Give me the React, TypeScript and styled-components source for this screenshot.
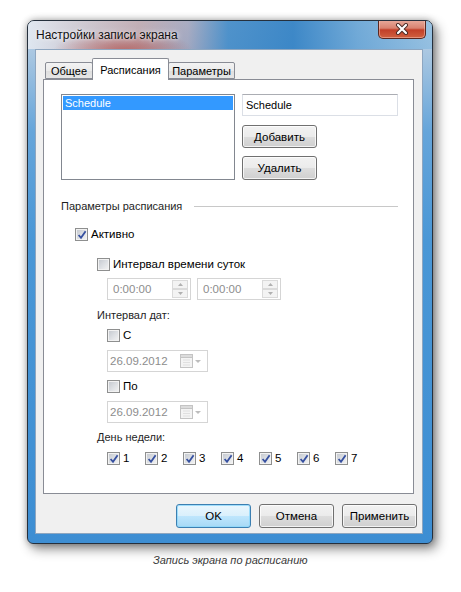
import React from "react";
import styled, { createGlobalStyle } from "styled-components";

const GlobalStyle = createGlobalStyle`
  html, body {
    margin: 0;
    padding: 0;
    background: #fff;
  }
  body {
    font-family: "Liberation Sans", Arial, sans-serif;
    font-size: 11px;
    color: #000;
  }
`;

const Page = styled.div`
  width: 461px;
  height: 592px;
  box-sizing: border-box;
  padding: 20px 0 0 27px;
  display: flex;
  flex-direction: column;
  background: #fff;
  overflow: hidden;
`;

const Window = styled.div`
  width: 406px;
  height: 524px;
  box-sizing: border-box;
  border: 1px solid #25303d;
  border-radius: 7px 7px 6px 6px;
  background: linear-gradient(
    180deg,
    #c3d5e6 0px,
    #a2c3e0 40px,
    #66a5da 110px,
    #4a97d6 220px,
    #3d8ed3 100%
  );
  box-shadow: 4px 5px 12px rgba(0, 0, 0, 0.45), 0 0 7px rgba(0, 0, 0, 0.3);
  display: flex;
  flex-direction: column;
  overflow: hidden;
`;

const TitleBar = styled.div`
  height: 28px;
  flex: none;
  display: flex;
  align-items: flex-start;
  justify-content: space-between;
  padding: 0 6px 0 8px;
  background: radial-gradient(
      ellipse 70px 22px at 95px 30px,
      rgba(180, 85, 80, 0.75),
      rgba(180, 85, 80, 0) 100%
    ),
    linear-gradient(
      90deg,
      rgba(228, 234, 242, 0.9) 0px,
      rgba(215, 200, 205, 0.7) 50px,
      rgba(195, 150, 150, 0.6) 110px,
      rgba(150, 140, 165, 0.55) 160px,
      rgba(60, 135, 198, 0.85) 200px,
      rgba(48, 128, 196, 0.9) 265px,
      rgba(95, 160, 212, 0.8) 330px,
      rgba(140, 188, 224, 0.75) 100%
    );
`;

const Title = styled.div`
  align-self: center;
  font-size: 12px;
  color: #111;
  text-shadow: 0 0 6px rgba(255, 255, 255, 0.85), 0 0 3px rgba(255, 255, 255, 0.7);
`;

const CloseButton = styled.div`
  width: 48px;
  height: 19px;
  margin-top: -1px;
  box-sizing: border-box;
  border: 1px solid #5a2720;
  border-top: none;
  border-radius: 0 0 5px 5px;
  background: linear-gradient(180deg, #e8ab9c 0%, #d88270 45%, #c23f28 55%, #d0603f 100%);
  box-shadow: inset 0 0 0 1px rgba(255, 210, 200, 0.45);
  display: flex;
  align-items: center;
  justify-content: center;
`;

const Frame = styled.div`
  flex: 1;
  padding: 0 9px 9px 7px;
  display: flex;
`;

const Client = styled.div`
  flex: 1;
  box-sizing: border-box;
  border: 1px solid #8ea6c0;
  background: #f0f0f0;
  padding: 8px 5px 0 7px;
  display: flex;
  flex-direction: column;
`;

const TabStrip = styled.div`
  display: flex;
  align-items: flex-end;
  margin-left: 2px;
  height: 21px;
  position: relative;
  z-index: 1;
`;

const Tab = styled.div<{ $active?: boolean; $width: number }>`
  width: ${(p) => p.$width}px;
  height: ${(p) => (p.$active ? 22 : 17)}px;
  box-sizing: border-box;
  border: 1px solid #898c95;
  border-bottom: ${(p) => (p.$active ? "none" : "1px solid #898c95")};
  margin-bottom: ${(p) => (p.$active ? -1 : 0)}px;
  margin-right: -1px;
  border-radius: 2px 2px 0 0;
  background: ${(p) =>
    p.$active ? "#fff" : "linear-gradient(180deg, #f3f3f3 0%, #ebebeb 50%, #dedede 51%, #e6e6e6 100%)"};
  display: flex;
  align-items: center;
  justify-content: center;
  padding-top: ${(p) => (p.$active ? 0 : 1)}px;
  color: #000;
`;

const Panel = styled.div`
  width: 371px;
  height: 415px;
  box-sizing: border-box;
  border: 1px solid #898c95;
  background: #fff;
  padding: 14px 0 0 17px;
  display: flex;
  flex-direction: column;
`;

const TopRow = styled.div`
  display: flex;
  gap: 7px;
  height: 86px;
`;

const ListBox = styled.div`
  width: 174px;
  height: 86px;
  box-sizing: border-box;
  border: 1px solid #828790;
  padding: 1px;
`;

const ListItem = styled.div<{ $selected?: boolean }>`
  height: 14px;
  line-height: 14px;
  padding-left: 2px;
  background: ${(p) => (p.$selected ? "#3399ff" : "transparent")};
  color: ${(p) => (p.$selected ? "#fff" : "#000")};
`;

const SideColumn = styled.div`
  display: flex;
  flex-direction: column;
  gap: 8px;
`;

const TextInput = styled.div`
  width: 156px;
  height: 22px;
  box-sizing: border-box;
  border: 1px solid #dbdfe6;
  border-top-color: #abadb3;
  padding-left: 3px;
  display: flex;
  align-items: center;
  margin-bottom: 1px;
`;

const Button = styled.div<{ $default?: boolean; $width?: number }>`
  width: ${(p) => p.$width ?? 75}px;
  height: 24px;
  box-sizing: border-box;
  border: 1px solid ${(p) => (p.$default ? "#3c7fb1" : "#707070")};
  border-radius: 3px;
  background: ${(p) =>
    p.$default
      ? "linear-gradient(180deg, #eaf6fd 0%, #d9f0fc 50%, #bee6fd 51%, #a7d9f5 100%)"
      : "linear-gradient(180deg, #f2f2f2 0%, #ebebeb 50%, #dddddd 51%, #cfcfcf 100%)"};
  box-shadow: inset 0 0 0 1px
    ${(p) => (p.$default ? "rgba(140, 215, 250, 0.8)" : "rgba(255, 255, 255, 0.75)")};
  display: flex;
  align-items: center;
  justify-content: center;
  font-size: 11.5px;
  color: #000;
`;

const GroupHeader = styled.div`
  display: flex;
  align-items: center;
  gap: 12px;
  height: 14px;
  margin: 19px 15px 0 0;
  color: #1e1e1e;
`;

const GroupLine = styled.div`
  flex: 1;
  height: 1px;
  background: #c8c8c8;
`;

const Row = styled.div<{ $indent: number; $top: number; $gap?: number }>`
  display: flex;
  align-items: center;
  margin-left: ${(p) => p.$indent}px;
  margin-top: ${(p) => p.$top}px;
  gap: ${(p) => p.$gap ?? 0}px;
`;

const Label = styled.div<{ $indent: number; $top: number }>`
  height: 14px;
  line-height: 14px;
  margin-left: ${(p) => p.$indent}px;
  margin-top: ${(p) => p.$top}px;
  color: #1e1e1e;
`;

const CheckItem = styled.div<{ $width?: number }>`
  display: flex;
  align-items: center;
  gap: 3px;
  height: 13px;
  width: ${(p) => (p.$width ? `${p.$width}px` : "auto")};
  line-height: 13px;
  font-size: 11.5px;
`;

const Box = styled.span`
  width: 13px;
  height: 13px;
  flex: none;
  box-sizing: border-box;
  border: 1px solid #8e8f8f;
  background: linear-gradient(135deg, #c2c6cd 0%, #dcdfe3 50%, #f4f4f4 100%);
  box-shadow: inset 0 0 0 1px #f2f2f2;
  display: flex;
  align-items: center;
  justify-content: center;
`;

const Spinner = styled.div`
  width: 84px;
  height: 22px;
  box-sizing: border-box;
  border: 1px solid #d5d5d5;
  display: flex;
  align-items: center;
  justify-content: space-between;
  padding: 0 2px 0 5px;
  color: #8d8d8d;
  font-size: 11.5px;
`;

const SpinButtons = styled.div`
  width: 16px;
  height: 18px;
  display: flex;
  flex-direction: column;
`;

const SpinButton = styled.div`
  flex: 1;
  box-sizing: border-box;
  border: 1px solid #dadada;
  background: #f3f3f3;
  display: flex;
  align-items: center;
  justify-content: center;
`;

const DateBox = styled.div`
  width: 101px;
  height: 22px;
  box-sizing: border-box;
  border: 1px solid #d5d5d5;
  display: flex;
  align-items: center;
  padding: 0 5px 0 2px;
  color: #8d8d8d;
  font-size: 11.5px;
`;

const DateText = styled.span`
  flex: 1;
`;

const ButtonRow = styled.div`
  display: flex;
  justify-content: flex-end;
  gap: 8px;
  margin-top: 10px;
`;

const Caption = styled.div`
  margin: 9px 0 0 126px;
  font-style: italic;
  font-size: 11px;
  line-height: 14px;
  color: #3a3a3a;
`;

const Check = () => (
  <svg width="10" height="10" viewBox="0 0 10 10">
    <path d="M1.6 5 L4 7.8 L8.6 1.2" fill="none" stroke="#3650a0" strokeWidth="1.8" />
  </svg>
);

const CheckBox: React.FC<{ checked?: boolean; label: string; width?: number }> = ({
  checked,
  label,
  width,
}) => (
  <CheckItem $width={width}>
    <Box>{checked && <Check />}</Box>
    <span>{label}</span>
  </CheckItem>
);

const Arrow: React.FC<{ up?: boolean }> = ({ up }) => (
  <svg width="5" height="3" viewBox="0 0 5 3">
    <path d={up ? "M0 3 L2.5 0 L5 3 Z" : "M0 0 L2.5 3 L5 0 Z"} fill="#b0b0b0" />
  </svg>
);

const TimeSpinner = () => (
  <Spinner>
    <span>0:00:00</span>
    <SpinButtons>
      <SpinButton>
        <Arrow up />
      </SpinButton>
      <SpinButton>
        <Arrow />
      </SpinButton>
    </SpinButtons>
  </Spinner>
);

const DatePicker = () => (
  <DateBox>
    <DateText>26.09.2012</DateText>
    <svg width="22" height="14" viewBox="0 0 22 14">
      <rect x="0.5" y="0.5" width="12" height="13" fill="#f4f4f4" stroke="#c4c4c4" />
      <rect x="0.5" y="0.5" width="12" height="3" fill="#dcdcdc" stroke="#c4c4c4" />
      <path d="M3 6h7M3 8.5h7M3 11h7" stroke="#e0e0e0" />
      <path d="M15 6 L21 6 L18 9 Z" fill="#bdbdbd" />
    </svg>
  </DateBox>
);

const App: React.FC = () => {
  return (
    <>
      <GlobalStyle />
      <Page>
        <Window>
          <TitleBar>
            <Title>Настройки записи экрана</Title>
            <CloseButton>
              <svg width="14" height="12" viewBox="0 0 14 12">
                <path d="M3 2 L11 10 M11 2 L3 10" stroke="#4a2a25" strokeWidth="4" strokeLinecap="round" />
                <path d="M3 2 L11 10 M11 2 L3 10" stroke="#fff" strokeWidth="2.2" strokeLinecap="round" />
              </svg>
            </CloseButton>
          </TitleBar>
          <Frame>
            <Client>
              <TabStrip>
                <Tab $width={48}>Общее</Tab>
                <Tab $width={77} $active>
                  Расписания
                </Tab>
                <Tab $width={67}>Параметры</Tab>
              </TabStrip>
              <Panel>
                <TopRow>
                  <ListBox>
                    <ListItem $selected>Schedule</ListItem>
                  </ListBox>
                  <SideColumn>
                    <TextInput>Schedule</TextInput>
                    <Button>Добавить</Button>
                    <Button>Удалить</Button>
                  </SideColumn>
                </TopRow>

                <GroupHeader>
                  <span>Параметры расписания</span>
                  <GroupLine />
                </GroupHeader>

                <Row $indent={14} $top={15}>
                  <CheckBox checked label="Активно" />
                </Row>
                <Row $indent={36} $top={17}>
                  <CheckBox label="Интервал времени суток" />
                </Row>
                <Row $indent={46} $top={7} $gap={6}>
                  <TimeSpinner />
                  <TimeSpinner />
                </Row>

                <Label $indent={36} $top={8}>
                  Интервал дат:
                </Label>
                <Row $indent={46} $top={7}>
                  <CheckBox label="С" />
                </Row>
                <Row $indent={46} $top={8}>
                  <DatePicker />
                </Row>
                <Row $indent={46} $top={8}>
                  <CheckBox label="По" />
                </Row>
                <Row $indent={46} $top={8}>
                  <DatePicker />
                </Row>

                <Label $indent={36} $top={7}>
                  День недели:
                </Label>
                <Row $indent={46} $top={8}>
                  {[1, 2, 3, 4, 5, 6, 7].map((d) => (
                    <CheckBox key={d} checked label={String(d)} width={38} />
                  ))}
                </Row>
              </Panel>
              <ButtonRow>
                <Button $default>OK</Button>
                <Button>Отмена</Button>
                <Button>Применить</Button>
              </ButtonRow>
            </Client>
          </Frame>
        </Window>
        <Caption>Запись экрана по расписанию</Caption>
      </Page>
    </>
  );
};

export default App;
